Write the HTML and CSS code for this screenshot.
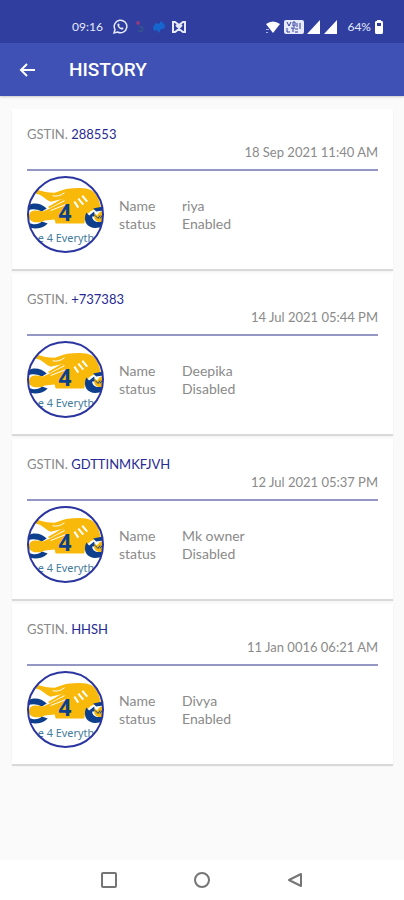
FILE: index.html
```
<!DOCTYPE html>
<html lang="en">
<head>
    <meta charset="UTF-8">
    <meta name="viewport" content="width=device-width, initial-scale=1.0">
    <title>History</title>
    <link rel="stylesheet" href="styles.css">
</head>
<body>

<!-- Shared logo -->
<svg class="sprite" aria-hidden="true">
    <defs>
        <clipPath id="logoClip"><circle cx="39" cy="39" r="38"/></clipPath>
    </defs>
    <symbol id="logo" viewBox="0 0 78 78">
        <circle cx="39" cy="39" r="38" fill="#fff"/>
        <g clip-path="url(#logoClip)">
            <path d="M1 30 C7 26 15 28 20 33 L15 36 C9 33 5 33 1 35 Z" fill="#0d3f8c"/>
            <path d="M1 47 C7 50 12 49 15 46 L21 48 C15 54 7 54 1 52 Z" fill="#0d3f8c"/>
            <path d="M10 14 C17 16 21 17 28 17 L37 14 C43 12 60 11 66 15 C71 18 74 26 75 34 L68 34 C62 36 59 41 58 48 L29 48 L28 44 L18 45 C14 48 3 48 2 42 C1 34 10 34 16 36 L23 33 C28 30 32 27 37 23 L24 26 C18 24 16 19 9 18 Z" fill="#f8b90b"/>
            <path d="M26 20 C30 21 34 20 38 17 M22 33 L38 25 M24 35 L39 29" fill="none" stroke="#fff" stroke-width="1"/>
            <path d="M22 32 L36 24" stroke="#f8b90b" stroke-width="2"/>
            <path d="M48 26 L52 32 M52 23 L57 29 M56 20 L61 26" stroke="#fff" stroke-width="2"/>
            <path d="M60 37 C55 49 65 56 77 51 L77 46 C70 48 66 45 66 41 L69 41 L68 36 L63 40 Z" fill="#0d3f8c"/>
            <path d="M67 33 L77 31 L77 35 L70 36 Z" fill="#0d3f8c"/>
            <path d="M69 38 L71 40 L74 36 L78 37 L78 46 C72 48 68 45 68 41 Z" fill="#f8b90b"/>
            <path d="M69 40 L72 43 L74 40 M74 43 L76 40" fill="none" stroke="#0d3f8c" stroke-width="1"/>
            <text class="logo-number" x="32" y="46">4</text>
            <text class="logo-text" x="11" y="67">e 4 Everyth</text>
        </g>
        <circle cx="39" cy="39" r="38" fill="none" stroke="#2b35a0" stroke-width="2"/>
    </symbol>
</svg>

<div class="screen">
    <!-- Status bar -->
    <div class="status-bar">
        <div class="status-left">
            <span>09:16</span>
            <svg width="16" height="16" viewBox="0 0 16 16" fill="none" stroke="#e6e9fa">
                <path d="M2 14 L3 10.500 A6.300 6.300 0 1 1 5.500 13 Z" stroke-width="1.500"/>
                <path d="M5.500 5 C5 8 8 11 11 10.500 L11.500 9 L10 8.200 L9 9 L7 7 L7.700 6 L7 4.500 Z" fill="#e6e9fa" stroke="none"/>
            </svg>
            <svg width="12" height="14" viewBox="0 0 12 14">
                <circle cx="4" cy="3" r="2" fill="#8d3c80"/>
                <path d="M5 6 L9 8 L8 11 L4 11" fill="none" stroke="#34508f" stroke-width="2"/>
            </svg>
            <svg width="14" height="14" viewBox="0 0 14 14" fill="#1766d0">
                <path d="M1 7 L4 3 L7 4 L9 1 L13 5 L12 9 L9 9 L7 13 L5 10 L2 11 Z"/>
            </svg>
            <svg width="14" height="14" viewBox="0 0 14 14" fill="none" stroke="#e6e9fa" stroke-width="2">
                <path d="M1 12 V2 H3 L7 5 L11 2 H13 V12 H11 L7 9 L3 12 Z M4 5 L7 8 L10 5"/>
            </svg>
        </div>
        <div class="status-right">
            <svg width="16" height="14" viewBox="0 0 16 14" fill="#fff">
                <path d="M1 4 Q8 -1 15 4 L8 13 Z"/>
                <path d="M1 9 H4 V10 H1 Z M1 12 H3 V13 H1 Z" opacity=".6"/>
            </svg>
            <svg width="20" height="16" viewBox="0 0 20 16">
                <rect x="0" y="1" width="20" height="14" rx="2" fill="#e6e9fa"/>
                <path d="M3 3 L5 7 L7 3 M9 3 H11 V7 H9 Z M3 9 V13 H6 M7 9 H11 M9 9 V13 M13 4 V8 M11 10 H14 M11 13 H14 M16 4 V10" fill="none" stroke="#303f9f"/>
            </svg>
            <svg width="14" height="14" viewBox="0 0 14 14" fill="#fff"><path d="M0 14 L13 0 V14 Z"/></svg>
            <svg width="14" height="14" viewBox="0 0 14 14" fill="#fff"><path d="M0 14 L13 0 V14 Z"/></svg>
            <span class="battery">64%</span>
            <svg width="10" height="14" viewBox="0 0 10 14">
                <path d="M3 0 H7 V1 H8 Q9 1 9 3 V12 Q9 14 8 14 H2 Q1 14 1 12 V3 Q1 1 2 1 H3 Z" fill="#fff"/>
                <rect x="3" y="3" width="4" height="3" fill="#303f9f"/>
            </svg>
        </div>
    </div>

    <!-- App bar -->
    <header class="app-bar">
        <button type="button" class="back" aria-label="Back">
            <svg width="18" height="18" viewBox="0 0 18 18" fill="none" stroke="#fff" stroke-width="2">
                <path d="M17 9 H3 M9 3 L3 9 L9 15"/>
            </svg>
        </button>
        <h1>HISTORY</h1>
    </header>

    <!-- History list -->
    <main class="list">
        <article class="card">
            <p class="gstin">GSTIN. <span>288553</span></p>
            <p class="date">18 Sep 2021 11:40 AM</p>
            <div class="details">
                <svg class="logo"><use href="#logo"/></svg>
                <dl>
                    <dt>Name</dt><dd>riya</dd>
                    <dt>status</dt><dd>Enabled</dd>
                </dl>
            </div>
        </article>
        <article class="card">
            <p class="gstin">GSTIN. <span>+737383</span></p>
            <p class="date">14 Jul 2021 05:44 PM</p>
            <div class="details">
                <svg class="logo"><use href="#logo"/></svg>
                <dl>
                    <dt>Name</dt><dd>Deepika</dd>
                    <dt>status</dt><dd>Disabled</dd>
                </dl>
            </div>
        </article>
        <article class="card">
            <p class="gstin">GSTIN. <span>GDTTINMKFJVH</span></p>
            <p class="date">12 Jul 2021 05:37 PM</p>
            <div class="details">
                <svg class="logo"><use href="#logo"/></svg>
                <dl>
                    <dt>Name</dt><dd>Mk owner</dd>
                    <dt>status</dt><dd>Disabled</dd>
                </dl>
            </div>
        </article>
        <article class="card">
            <p class="gstin">GSTIN. <span>HHSH</span></p>
            <p class="date">11 Jan 0016 06:21 AM</p>
            <div class="details">
                <svg class="logo"><use href="#logo"/></svg>
                <dl>
                    <dt>Name</dt><dd>Divya</dd>
                    <dt>status</dt><dd>Enabled</dd>
                </dl>
            </div>
        </article>
    </main>

    <!-- Navigation buttons -->
    <nav class="nav-bar">
        <button type="button" aria-label="Recent apps">
            <svg width="16" height="16" viewBox="0 0 16 16"><rect x="1" y="1" width="14" height="14" rx="1"/></svg>
        </button>
        <button type="button" aria-label="Home">
            <svg width="16" height="16" viewBox="0 0 16 16"><circle cx="8" cy="8" r="7"/></svg>
        </button>
        <button type="button" aria-label="Back">
            <svg width="16" height="16" viewBox="0 0 16 16"><path d="M14 2 V14 L2 8 Z" stroke-linejoin="round"/></svg>
        </button>
    </nav>
</div>

</body>
</html>
```
FILE: styles.css
```
* {
    box-sizing: border-box;
}

body {
    margin: 0;
    font-family: Lato, "Liberation Sans", sans-serif;
    font-size: 14px;
    line-height: 18px;
    color: #8a8a8a;
    background-color: #fafafa;
}

h1, p, dl, dd {
    margin: 0;
}

svg {
    display: block;
    flex-shrink: 0;
}

button {
    padding: 0;
    border: none;
    background: none;
    cursor: pointer;
}

.sprite {
    position: absolute;
    width: 0;
    height: 0;
}

.screen {
    display: flex;
    flex-direction: column;
    min-height: 100vh;
}

/* Status bar */
.status-bar {
    display: flex;
    justify-content: space-between;
    padding: 18px 20px 7px 72px;
    background-color: #303f9f;
    color: #e6e9fa;
    font-size: 12px;
}

.status-left, .status-right {
    display: flex;
    align-items: center;
    gap: 6px;
}

.status-left span {
    margin-right: 3px;
}

.status-right {
    gap: 3px;
}

.battery {
    margin-left: 6px;
}

/* App bar */
.app-bar {
    display: flex;
    align-items: center;
    height: 53px;
    padding: 0 18px;
    gap: 33px;
    background-color: #3f51b5;
    box-shadow: 0 1px 2px rgba(0, 0, 0, 0.2);
}

.app-bar h1 {
    color: #fff;
    font-family: Roboto, sans-serif;
    font-size: 19px;
    font-weight: 500;
    line-height: 24px;
}

/* Cards */
.list {
    display: flex;
    flex-direction: column;
    flex: 1;
    gap: 5px;
    padding: 13px 11px 12px 12px;
}

.card {
    padding: 16px 15px;
    background-color: #fff;
    box-shadow: 0 2px 1px rgba(0, 0, 0, 0.13);
}

.gstin, .date {
    font-size: 13px;
}

.gstin span {
    color: #262a92;
}

.date {
    padding-bottom: 8px;
    border-bottom: 2px solid #9497c3;
    text-align: right;
}

.details {
    display: flex;
    align-items: center;
    gap: 15px;
    padding-top: 5px;
}

.logo {
    width: 77px;
    height: 77px;
}

.details dl {
    display: grid;
    grid-template-columns: 63px auto;
}

.logo-number {
    fill: #0d3f8c;
    font-family: "Open Sans", sans-serif;
    font-size: 23px;
    font-weight: 700;
}

.logo-text {
    fill: #437a9c;
    font-family: "Noto Sans", sans-serif;
    font-size: 11px;
}

/* Navigation */
.nav-bar {
    display: flex;
    align-items: center;
    justify-content: center;
    gap: 77px;
    height: 40px;
    background-color: #fff;
}

.nav-bar svg {
    fill: none;
    stroke: #757575;
    stroke-width: 2px;
}
```
